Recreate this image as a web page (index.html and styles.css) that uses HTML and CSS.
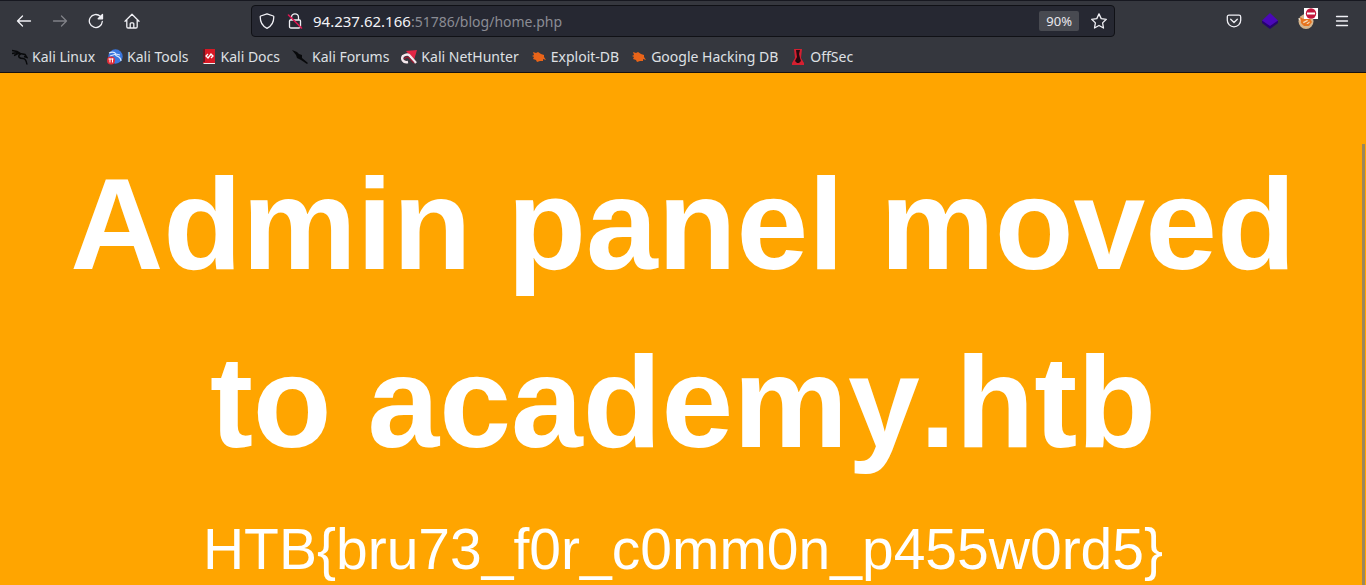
FILE: index.html
```html
<!DOCTYPE html>
<html lang="en">
<head>
<meta charset="utf-8">
<title>Blog home</title>
<link rel="stylesheet" href="styles.css">
</head>
<body>
<header class="chrome">
  <div class="toolbar">
    <div class="nav">
      <button class="icon-btn" aria-label="Back"><svg width="16" height="16" viewBox="0 0 16 16"><path d="M14.500 8H1.500M6.500 3l-5 5 5 5"/></svg></button>
      <button class="icon-btn dim" aria-label="Forward" disabled><svg width="16" height="16" viewBox="0 0 16 16"><path d="M1.500 8h13M9.500 3l5 5-5 5"/></svg></button>
      <button class="icon-btn" aria-label="Reload"><svg width="16" height="16" viewBox="0 0 16 16"><path d="M12.300 3.300A6.500 6.500 0 1 0 14.300 8.500"/><path class="solid" d="M14.500 1.500v4.300h-4.300z"/></svg></button>
      <button class="icon-btn" aria-label="Home"><svg width="16" height="16" viewBox="0 0 16 16"><path d="M1 8.200 8 1.200l7 7M2.800 7v6.700q0 1.300 1.300 1.300h7.800q1.300 0 1.300-1.300V7M6.200 15v-4.200q0-1 1-1h1.600q1 0 1 1V15"/></svg></button>
    </div>
    <div class="urlbar">
      <button class="url-btn" aria-label="Tracking protection"><svg width="16" height="16" viewBox="0 0 16 16"><path d="M8 .8 14.300 3q.5.2.5.8C14.800 9.500 12 13.500 8 15.300 4 13.500 1.200 9.500 1.200 3.800q0-.6.5-.8z"/></svg></button>
      <button class="url-btn" aria-label="Connection not secure"><svg width="16" height="16" viewBox="0 0 16 16"><path d="M4.500 7V4.300a3.500 3.500 0 0 1 7 0V7M3.500 7h9q1 0 1 1v5.500q0 1.500-1.500 1.500H4q-1.500 0-1.500-1.500V8q0-1 1-1z"/><path class="slash" d="m1.500 2 13 13"/></svg></button>
      <div class="address" role="textbox" tabindex="0" aria-label="Address"><span class="host">94.237.62.166</span>:51786/blog/home.php</div>
      <button class="zoom">90%</button>
      <button class="url-btn" aria-label="Bookmark this page"><svg width="16" height="16" viewBox="0 0 16 16"><path d="m8 .9 2.200 4.700 5.100.7-3.700 3.600.9 5.100L8 12.500 3.500 15l.9-5.100L.7 6.300l5.100-.7z"/></svg></button>
    </div>
    <div class="tools">
      <button class="icon-btn" aria-label="Save to Pocket"><svg width="16" height="16" viewBox="0 0 16 16"><path d="M3 2.200h10q1.700 0 1.700 1.700v3.400a6.700 6.500 0 0 1-13.400 0V3.900Q1.300 2.200 3 2.200zM4.700 6.300 8 9.500l3.300-3.200"/></svg></button>
      <button class="icon-btn" aria-label="Wappalyzer"><svg class="art" width="16" height="16" viewBox="0 0 16 16"><path fill="#27036f" d="M0 8 8 3l8 5v2l-8 6-8-6z"/><path fill="#4b08b8" d="M0 7.500 8 0l8 7.500-8 5.500z"/></svg></button>
      <button class="icon-btn" aria-label="FoxyProxy">
        <svg class="art" width="16" height="16" viewBox="0 0 16 16"><circle cx="8" cy="8.500" r="7.500" fill="#d6b58c"/><path fill="#f4e8d5" d="M0 5.500 5 5l-1 5z"/><path fill="#e87520" d="m2 4 4 2 5-2 3 5-3 4-5 0-3-3z"/><path fill="#f8dfbd" d="m5 9 4-2 3 2-2 2-4 0z"/><path fill="#e87520" d="m4 11 8-4 0 1-5 4z"/></svg>
        <span class="badge"><svg class="art" width="14" height="11" viewBox="0 0 14 11"><circle cx="7" cy="5.500" r="5.200" fill="#c3173c"/><path fill="#fff" d="M3 4.500h8v2H3z"/></svg></span>
      </button>
      <button class="icon-btn" aria-label="Open application menu"><svg width="16" height="16" viewBox="0 0 16 16"><path d="M2.500 3.500h11M2.500 8h11M2.500 12.500h11"/></svg></button>
    </div>
  </div>
  <nav class="bookmarks" aria-label="Bookmarks">
    <a href="#"><svg width="16" height="16" viewBox="0 0 16 16"><path fill="none" stroke="#08090b" stroke-width="1.500" d="M0 1.500 5 2.500l4 2.500M0 4.500l5-1 4 2M2 6.500l4-2M8 5C5 8 8 9.500 11 9.500q3 0 4 6M8 4.500l5 1 2 3-3-1"/></svg>Kali Linux</a>
    <a href="#"><svg width="16" height="16" viewBox="0 0 16 16"><circle cx="8.500" cy="7.500" r="7.200" fill="#3976de"/><path fill="none" stroke="#d8e9ff" stroke-width="1.200" d="M2 4q5-2 7 1c-2 3 5 1 5 7M3 7l6-2 4 1"/><circle cx="4" cy="11.500" r="4" fill="#e12d38"/><path stroke="#fff" d="M1.500 10h5M3 9.500v4M5.500 9.500v4"/></svg>Kali Tools</a>
    <a href="#"><svg width="16" height="16" viewBox="0 0 16 16"><path fill="#d71925" d="M3 0h11v14H2V1z"/><path fill="#661722" d="M2 0h2v13H2z"/><path fill="#eee" d="M3 14h11v1H2z"/><path fill="none" stroke="#fff" stroke-width="1.300" d="M7 5 5 7l2 2 3-4 2 2-2 2"/></svg>Kali Docs</a>
    <a href="#"><svg width="16" height="16" viewBox="0 0 16 16"><path fill="#08090b" d="m0 1 5 2 2 2 3 1v3l6 5-1 1-6-4-4-2-1-3z"/></svg>Kali Forums</a>
    <a href="#"><svg width="16" height="16" viewBox="0 0 16 16"><path fill="#e32645" d="m5 2 11-1-3 10z"/><path fill="none" stroke="#f5e8ed" stroke-width="2.400" d="M7 13C2 14 0 10 2 7q5-3 7 0l6 7"/><path fill="none" stroke="#9b1830" stroke-width="1.200" d="M3 10q3-3 5-1l5 5"/></svg>Kali NetHunter</a>
    <a href="#"><svg width="16" height="16" viewBox="0 0 16 16"><path fill="#e96419" d="m2 3 3 1 2-1 3 2 3 1v2l2 3-3-1v2l-3 0-3 1-1-2-3-1 1-2-2-1 2-1z"/></svg>Exploit-DB</a>
    <a href="#"><svg width="16" height="16" viewBox="0 0 16 16"><path fill="#e96419" d="m2 3 3 1 2-1 3 2 3 1v2l2 3-3-1v2l-3 0-3 1-1-2-3-1 1-2-2-1 2-1z"/></svg>Google Hacking DB</a>
    <a href="#"><svg width="16" height="16" viewBox="0 0 16 16"><path fill="#d51f30" d="M4 0h8l-1 9 3 5v2H2v-2l3-5z"/><path fill="#26090f" d="M6 1h4L9 5l1 4 1 3-2 2H7l-2-2 2-4z"/></svg>OffSec</a>
  </nav>
</header>
<main class="page">
  <h1>Admin panel moved to academy.htb</h1>
  <p>HTB{bru73_f0r_c0mm0n_p455w0rd5}</p>
  <div class="scroll-thumb"></div>
</main>
</body>
</html>
```
FILE: styles.css
```css
* { box-sizing: border-box; }
body {
  margin: 0;
  height: 100vh;
  display: flex;
  flex-direction: column;
  overflow: hidden;
  font-family: "Noto Sans", sans-serif;
}
button { border: 0; padding: 0; background: none; color: inherit; font: inherit; }
svg { display: block; flex: none; }
.chrome {
  flex: none;
  background: #35373e;
  color: #e8e8ed;
  border-top: 1px solid #171820;
  border-bottom: 1px solid #17110f;
}
.toolbar {
  display: grid;
  grid-template-columns: 251px minmax(0, 1fr) 251px;
  align-items: center;
  height: 40px;
}
.nav, .tools { display: flex; gap: 4px; }
.nav { padding-left: 8px; }
.tools { justify-content: flex-end; padding-right: 8px; }
.icon-btn {
  position: relative;
  display: grid;
  place-items: center;
  width: 32px;
  height: 32px;
}
.icon-btn svg, .url-btn svg {
  fill: none;
  stroke: #f0f0f5;
  stroke-width: 1.3;
  stroke-linecap: round;
  stroke-linejoin: round;
}
.icon-btn svg.art { stroke: none; }
.icon-btn .solid { fill: #f0f0f5; }
.url-btn .slash { stroke: #df1753; stroke-width: 1.6; }
.dim { opacity: .4; }
.badge {
  position: absolute;
  top: 3px;
  right: 4px;
  background: #fff;
}
.urlbar {
  display: flex;
  align-items: center;
  height: 32px;
  padding: 0 1px;
  border: 1px solid #101116;
  border-radius: 4px;
  background: #262832;
}
.url-btn { display: grid; place-items: center; width: 28px; height: 28px; }
.address {
  flex: 1;
  padding-left: 4px;
  color: #8b8c94;
  font-size: 14px;
  white-space: nowrap;
}
.host { color: #f3f3f7; font-size: 15px; }
.zoom {
  height: 20px;
  padding: 0 7px;
  margin-right: 6px;
  border-radius: 2px;
  background: #484a51;
  font-size: 13px;
}
.bookmarks {
  display: flex;
  gap: 12px;
  align-items: center;
  height: 31px;
  padding: 0 12px;
}
.bookmarks a {
  display: flex;
  align-items: center;
  gap: 4px;
  color: #dfe0e4;
  font-size: 14px;
  text-decoration: none;
  white-space: nowrap;
}
.page {
  position: relative;
  flex: 1;
  min-height: 0;
  padding: 62px 40px 0;
  overflow: hidden;
  background: #ffa500;
  color: #fff;
  font-family: "Liberation Sans", Arial, sans-serif;
  font-kerning: none;
  text-align: center;
}
.page h1 { margin: 0 0 18px; font-size: 129px; line-height: 178px; }
.page p { margin: 0; font-size: 57px; line-height: 80px; }
.scroll-thumb {
  position: absolute;
  top: 71px;
  right: 1px;
  bottom: 0;
  width: 3px;
  background: #9a865d;
}
```
